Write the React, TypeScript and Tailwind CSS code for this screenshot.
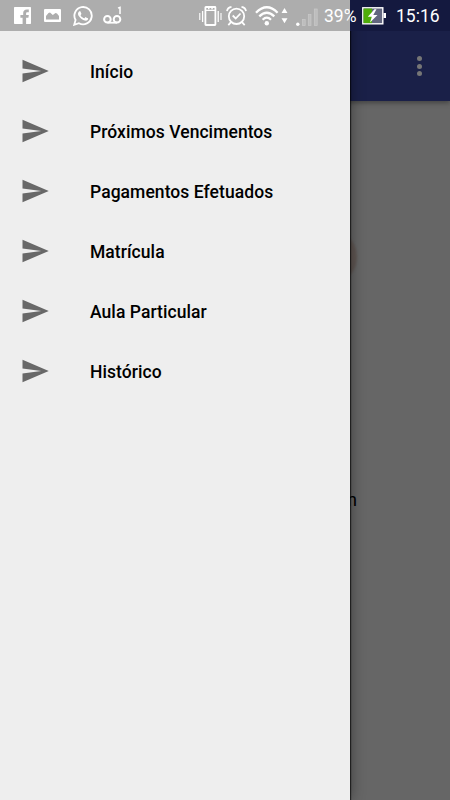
import React from "react";

const menuItems = [
  "Início",
  "Próximos Vencimentos",
  "Pagamentos Efetuados",
  "Matrícula",
  "Aula Particular",
  "Histórico",
];

function SendIcon() {
  return (
    <svg width="30" height="30" viewBox="0 0 24 24" fill="#686868" className="shrink-0">
      <path d="M2.01 21L23 12 2.01 3 2 10l15 2-15 2z" />
    </svg>
  );
}

function FacebookIcon() {
  return (
    <svg width="17" height="17" viewBox="0 0 17 17" className="shrink-0">
      <path
        fill="#fff"
        d="M.7 0h15.6a.7.7 0 0 1 .7.7v15.6a.7.7 0 0 1-.7.7h-4.200v-6.300h2.300l.4-2.700h-2.700V6.500c0-.8.4-1.200 1.300-1.200h1.400V2.600c-.5-.1-1.200-.1-1.900-.1-2.300 0-3.700 1.200-3.700 3.500v2H6.400v2.700h2.200V17H.7a.7.7 0 0 1-.7-.7V.7A.7.7 0 0 1 .7 0z"
      />
    </svg>
  );
}

function PictureIcon() {
  return (
    <svg width="17" height="13" viewBox="0 0 17 13" className="shrink-0">
      <path
        fill="#fff"
        fillRule="evenodd"
        d="M1 0h15a1 1 0 0 1 1 1v11a1 1 0 0 1-1 1H1a1 1 0 0 1-1-1V1a1 1 0 0 1 1-1zM2 10.500h13V7L13 4.500l-1.500-.5L8.800 6 6 3.500 4.500 4 2 7z"
      />
    </svg>
  );
}

function WhatsappIcon() {
  return (
    <svg width="20" height="20" viewBox="0 0 24 24" fill="#fff" className="shrink-0">
      <path d="M17.472 14.382c-.297-.149-1.758-.867-2.030-.967-.273-.099-.471-.148-.670.150-.197.297-.767.966-.940 1.164-.173.199-.347.223-.644.075-.297-.150-1.255-.463-2.390-1.475-.883-.788-1.480-1.761-1.653-2.059-.173-.297-.018-.458.130-.606.134-.133.298-.347.446-.520.149-.174.198-.298.298-.497.099-.198.050-.371-.025-.520-.075-.149-.669-1.612-.916-2.207-.242-.579-.487-.500-.669-.510-.173-.008-.371-.010-.570-.010-.198 0-.520.074-.792.372-.272.297-1.040 1.016-1.040 2.479 0 1.462 1.065 2.875 1.213 3.074.149.198 2.096 3.200 5.077 4.487.709.306 1.262.489 1.694.625.712.227 1.360.195 1.871.118.571-.085 1.758-.719 2.006-1.413.248-.694.248-1.289.173-1.413-.074-.124-.272-.198-.570-.347" />
      <path
        fill="none"
        stroke="#fff"
        strokeWidth="2.200"
        d="M1.500 22.500l1.600-5.700a10.400 10.400 0 1 1 4 3.900z"
      />
    </svg>
  );
}

function VoicemailIcon() {
  return (
    <svg width="20" height="18" viewBox="0 0 20 18" fill="none" stroke="#fff" className="shrink-0">
      <circle cx="4.400" cy="13.200" r="3.300" strokeWidth="2" />
      <circle cx="14" cy="13.200" r="3.300" strokeWidth="2" />
      <path d="M4.400 16.700H14" strokeWidth="1.800" />
      <path d="M15 2.100l2-.8v6.700" strokeWidth="1.500" />
    </svg>
  );
}

function VibrateIcon() {
  return (
    <svg width="23" height="20" viewBox="0 0 23 20" fill="none" stroke="#fff" className="shrink-0">
      <rect x="6.400" y="1" width="10" height="18" rx=".5" strokeWidth="1.800" />
      <path d="M6.500 4.300h10M9 2.600h1.500M12.300 2.600h1.500" strokeWidth="1.200" />
      <path d="M3.600 5v11M19.200 5v11" strokeWidth="1.300" />
      <path d="M.8 7v7M22 7v7" strokeWidth="1.100" />
    </svg>
  );
}

function AlarmIcon() {
  return (
    <svg width="21" height="20" viewBox="0 0 21 20" fill="none" stroke="#fff" className="shrink-0">
      <circle cx="10.500" cy="10.300" r="7.700" strokeWidth="1.800" />
      <path d="M6.700 9.500l3 3 4.800-5" strokeWidth="1.800" />
      <path d="M1 5.200Q1.500 1.500 5.500.9M15.500.9q4 .6 4.500 4.300" strokeWidth="1.700" />
      <path d="M5 16.200l-2.700 2.900M16 16.200l2.700 2.900" strokeWidth="1.800" />
    </svg>
  );
}

function WifiIcon() {
  return (
    <svg width="33" height="20" viewBox="0 0 33 20" fill="none" stroke="#fff" className="shrink-0">
      <path d="M1 6.700Q11.800-4.200 22.600 6.700" strokeWidth="2.300" />
      <path d="M4.300 10.300q7.500-7.200 15 0" strokeWidth="2.300" />
      <path d="M7.600 13.700q4.200-4 8.400 0" strokeWidth="2.200" />
      <circle cx="11.800" cy="17.200" r="2.200" fill="#fff" stroke="none" />
      <path d="M26.500 7l3-5 3 5zM26.500 12.200h6l-3 5z" fill="#fff" stroke="none" />
    </svg>
  );
}

function SignalIcon() {
  return (
    <svg width="22" height="18" viewBox="0 0 22 18" className="shrink-0">
      <circle cx="1.800" cy="16.200" r="1.700" fill="#fff" />
      <g fill="#bdbdbd" stroke="#c9c9c9" strokeWidth=".7">
        <rect x="6.500" y="11.400" width="2.700" height="6.200" />
        <rect x="12.300" y="6.600" width="2.700" height="11" />
        <rect x="18.300" y="1" width="2.900" height="16.600" />
      </g>
    </svg>
  );
}

function BatteryIcon() {
  return (
    <svg width="24" height="18" viewBox="0 0 24 18" className="shrink-0">
      <rect x=".8" y=".8" width="20" height="16" fill="#62667f" stroke="#fff" strokeWidth="1.400" />
      <rect x="1.500" y="1.500" width="8.500" height="14.600" fill="#4fae0b" />
      <rect x="21.500" y="6" width="2.500" height="5" fill="#fff" />
      <path d="M12.500 2.200L5.800 9.700h4L8 15.400l7.500-7.500h-4.200l3.200-5.700z" fill="#fff" />
    </svg>
  );
}

function StatusBar() {
  return (
    <header className="absolute inset-x-0 top-0 flex h-[31px] items-start bg-[linear-gradient(to_right,#adadad_350px,#14193f_350px)] pt-[6px] text-[17.5px] leading-[21px] text-white">
      <div className="flex pl-[14px]">
        <div className="mt-px mr-[13px]"><FacebookIcon /></div>
        <div className="mt-[3px] mr-[12px]"><PictureIcon /></div>
        <div className="mr-[10px]"><WhatsappIcon /></div>
        <div><VoicemailIcon /></div>
      </div>
      <div className="ml-[76px] flex">
        <div className="mr-[4px]"><VibrateIcon /></div>
        <div className="mr-[8px]"><AlarmIcon /></div>
        <div className="mr-[8px]"><WifiIcon /></div>
        <div className="mt-[2px]"><SignalIcon /></div>
      </div>
      <span className="ml-[6px] w-[38px] whitespace-nowrap">39%</span>
      <div className="mt-px w-[34px]"><BatteryIcon /></div>
      <time className="whitespace-nowrap">15:16</time>
    </header>
  );
}

export default function App() {
  return (
    <div className="relative h-[800px] w-[450px] overflow-hidden bg-[#666666] font-['Roboto','Liberation_Sans',sans-serif]">
      <main>
        <div className="flex h-[101px] items-center justify-end bg-[#1a2048] pt-[31px] pr-[28px] shadow-[0_2px_5px_rgba(0,0,0,0.35)]">
          <button aria-label="Menu" className="flex flex-col gap-[2.5px]">
            <span className="size-[5px] rounded-full bg-[#767676]" />
            <span className="size-[5px] rounded-full bg-[#767676]" />
            <span className="size-[5px] rounded-full bg-[#767676]" />
          </button>
        </div>
        <div className="mt-[132px] ml-[317px] h-[48px] w-[40px] rounded-[50%] bg-[#5f5652] blur-[1px]" />
        <p className="mt-[207px] w-[357px] text-right text-[17.5px] leading-6 text-black">n</p>
      </main>
      <aside className="absolute inset-y-0 left-0 w-[350px] bg-[#eeeeee] pt-[41px] shadow-[0_0_14px_rgba(0,0,0,0.45),1px_0_1px_rgba(0,0,0,0.6)]">
        <nav>
          {menuItems.map((item) => (
            <a key={item} className="flex h-[60px] items-center gap-[40px] pl-[20px]">
              <SendIcon />
              <span className="pt-px text-[17.5px] leading-6 font-medium tracking-[0.06px] text-black">{item}</span>
            </a>
          ))}
        </nav>
      </aside>
      <StatusBar />
    </div>
  );
}
